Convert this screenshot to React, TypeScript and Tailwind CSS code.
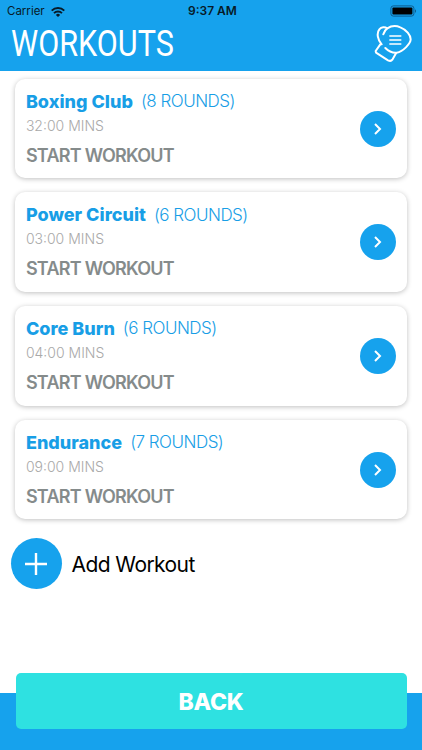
import React from "react";

type Workout = {
    name: string;
    rounds: number;
    duration: string;
};

const workouts: Workout[] = [
    {name: "Boxing Club", rounds: 8, duration: "32:00"},
    {name: "Power Circuit", rounds: 6, duration: "03:00"},
    {name: "Core Burn", rounds: 6, duration: "04:00"},
    {name: "Endurance", rounds: 7, duration: "09:00"},
];

const WifiIcon = () => (
    <svg className="h-[10px] w-[14px]" viewBox="0 0 14 10" fill="none" stroke="#071a28" strokeWidth="1.9">
        <path d="M0.7 3.6a9 9 0 0 1 12.6 0"/>
        <path d="M3 6.1a5.7 5.7 0 0 1 8 0"/>
        <path d="M7 10 4.9 7.9a3 3 0 0 1 4.2 0Z" fill="#071a28" stroke="none"/>
    </svg>
);

const BatteryIcon = () => (
    <svg className="h-[12px] w-[27px]" viewBox="0 0 27 12">
        <rect x="0.9" y="0.9" width="23" height="10.2" rx="2.4" fill="none" stroke="#0d5c8e" strokeWidth="1"/>
        <rect x="2.4" y="2.4" width="20" height="7.2" rx="1" fill="#000"/>
        <path d="M25 4.2c1.4.5 1.4 3.1 0 3.6Z" fill="#0d5c8e"/>
    </svg>
);

const GloveIcon = () => (
    <svg className="h-[37px] w-[40px]" viewBox="39 30 120 111" fill="none" stroke="#fff" strokeWidth="6"
         strokeLinecap="round" strokeLinejoin="round">
        <path d="M67 58C69 50 73 44 79 40C90 33 106 32 118 37C136 44 149 60 149 73C149 85 127 110 107 113C96 114 83 109 73 99"/>
        <path d="M78 40C72 35 61 36 55 43C46 54 50 76 62 88L58 88L44 108L45 113L81 136Q90 140 94 134L105 115"/>
        <path d="M85 63H121M85 75H121M85 87H121" strokeWidth="4" strokeLinecap="butt"/>
    </svg>
);

const WorkoutCard: React.FC<{workout: Workout}> = ({workout}) => (
    <li className="flex h-[99.6px] items-center justify-between rounded-[10px] bg-white pl-[10.5px] pr-[10.5px] shadow-[0_1px_5px_rgba(0,0,0,0.25)]">
        <div className="whitespace-nowrap pt-[5px]">
            <div className="flex h-[22px] items-center gap-[8px] text-[#189ee6]">
                <span className="text-[18px] font-extrabold tracking-[0.001em]">{workout.name}</span>
                <span className="pt-px text-[17px] font-light tracking-[-0.03em]">({workout.rounds} ROUNDS)</span>
            </div>
            <div className="flex h-[26px] items-center text-[14px] font-light text-[#a9a9a9]">
                {workout.duration} MINS
            </div>
            <div className="flex h-[34px] items-center text-[18px] font-semibold tracking-[-0.042em] text-[#858b8b]">
                START WORKOUT
            </div>
        </div>
        <button className="flex size-9 items-center justify-center rounded-full bg-[#16a2ed]" type="button">
            <svg className="h-[12px] w-[8px]" viewBox="0 0 8 12" fill="none" stroke="#fff" strokeWidth="2">
                <path d="M1 1 6 6 1 11"/>
            </svg>
        </button>
    </li>
);

const App: React.FC = () => {
    return (
        <div className="flex h-[750px] w-[422px] flex-col overflow-hidden bg-white font-['Inter','Liberation_Sans',sans-serif]">
            <header className="h-[71.3px] shrink-0 bg-[#16a2ed]">
                <div className="grid h-[22px] grid-cols-3 items-center pl-[7px] pr-[5px] text-[11.5px] leading-none text-[#071a28]">
                    <div className="flex items-center gap-[6px] pt-px">
                        <span>Carrier</span>
                        <WifiIcon/>
                    </div>
                    <span className="pl-px text-center text-[12px] font-semibold">9:37 AM</span>
                    <div className="flex justify-end"><BatteryIcon/></div>
                </div>
                <div className="flex h-[43px] items-center justify-between pl-[11px] pr-[8px]">
                    <h1 className="origin-left scale-x-[0.85] font-['Roboto',sans-serif] text-[36px] leading-none text-white">
                        WORKOUTS
                    </h1>
                    <GloveIcon/>
                </div>
            </header>

            <main className="flex-1">
                <ul className="flex flex-col gap-[14.1px] pl-[15.4px] pr-[15.4px] pt-[7.5px]">
                    {workouts.map((workout) => (
                        <WorkoutCard key={workout.name} workout={workout}/>
                    ))}
                </ul>
                <button className="ml-[10.5px] mt-[19px] flex items-center gap-[10px]" type="button">
                    <span className="flex size-[51px] items-center justify-center rounded-full bg-[#16a2ed]">
                        <svg className="size-[22px]" viewBox="0 0 22 22" stroke="#fff" strokeWidth="2.4">
                            <path d="M11 0V22M0 11H22"/>
                        </svg>
                    </span>
                    <span className="pt-px text-[21px] tracking-[-0.027em] text-black">Add Workout</span>
                </button>
            </main>

            <footer className="h-[77px] shrink-0 bg-[linear-gradient(to_bottom,#fff_20.5px,#16a2ed_20.5px)] px-[15.5px]">
                <button className="h-[56px] w-full rounded-[5px] bg-[#2ee1e1] pt-[2px] text-[23px] font-extrabold tracking-[-0.01em] text-white" type="button">
                    BACK
                </button>
            </footer>
        </div>
    );
};

export default App;
